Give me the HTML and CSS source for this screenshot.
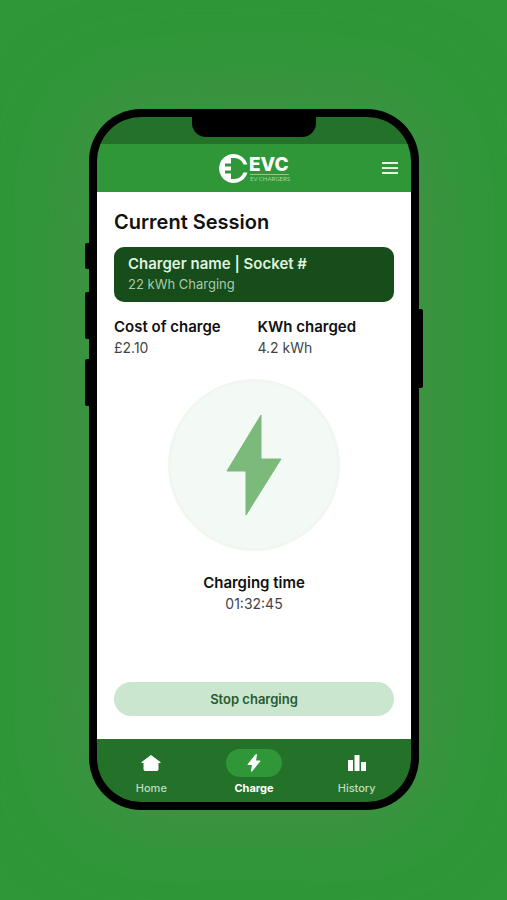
FILE: index.html
```html
<!DOCTYPE html>
<html lang="en">
<head>
<meta charset="UTF-8" />
<meta name="viewport" content="width=device-width, initial-scale=1" />
<title>EVC - Current Session</title>
<link rel="stylesheet" href="styles.css">
</head>
<body>

<div class="stage">
  <div class="phone">
    <!-- Side buttons -->
    <span class="side-key mute"></span>
    <span class="side-key volume-up"></span>
    <span class="side-key volume-down"></span>
    <span class="side-key power"></span>
    <span class="notch"></span>

    <div class="screen">
      <div class="status-bar"></div>

      <header class="header">
        <svg class="logo" viewBox="0 0 72 32" role="img" aria-label="EVC EV Chargers">
          <path fill="#fff" d="M15.500 2A14.500 14.500 0 1 0 29.500 20.500H25.500A10.500 10.500 0 0 1 16.500 27H13V21.500H7V18.500H13V14.500H7V11.500H13V6H16.500A10.500 10.500 0 0 1 25.500 12.500H29.500A14.500 14.500 0 0 0 15.500 2Z"/>
          <text class="logo-name" x="31" y="19">EVC</text>
          <path stroke="#8fc993" stroke-width="1" d="M32 22.500H71"/>
          <text class="logo-tag" x="32" y="29">EV CHARGERS</text>
        </svg>
        <button class="menu-button" type="button" aria-label="Menu">
          <svg width="16" height="12" viewBox="0 0 16 12"><path stroke="#e4f5e2" stroke-width="2" d="M0 1H16M0 6H16M0 11H16"/></svg>
        </button>
      </header>

      <main class="content">
        <h1>Current Session</h1>

        <section class="charger-card">
          <h2>Charger name | Socket #</h2>
          <p>22 kWh Charging</p>
        </section>

        <div class="stats">
          <div class="stat">
            <h2>Cost of charge</h2>
            <p>£2.10</p>
          </div>
          <div class="stat">
            <h2>KWh charged</h2>
            <p>4.2 kWh</p>
          </div>
        </div>

        <div class="charge-circle">
          <svg width="56" height="102" viewBox="0 0 56 102"><path fill="#7bba7b" stroke="#7bba7b" stroke-linejoin="round" d="M35 1V45H55L20 101V57H1Z"/></svg>
        </div>

        <div class="stat time">
          <h2>Charging time</h2>
          <p>01:32:45</p>
        </div>

        <button class="stop-button" type="button">Stop charging</button>
      </main>

      <nav class="nav">
        <a class="nav-item" href="#">
          <span class="nav-icon">
            <svg width="20" height="16" viewBox="0 0 20 16"><path fill="#fff" stroke="#fff" stroke-linejoin="round" d="M10 .5L19.300 7.500H17V14.500Q17 15.500 16 15.500H4Q3 15.500 3 14.500V7.500H.7Z"/></svg>
          </span>
          Home
        </a>
        <a class="nav-item active" href="#">
          <span class="nav-icon">
            <svg width="14" height="18" viewBox="0 0 14 18"><path fill="#fff" stroke="#fff" stroke-linejoin="round" d="M8.800 .6L.9 10.500H5.500L4.500 17.400L13.100 7H8.500L9.500 .6Z"/></svg>
          </span>
          Charge
        </a>
        <a class="nav-item" href="#">
          <span class="nav-icon">
            <svg width="18" height="16" viewBox="0 0 18 16"><path fill="#fff" d="M0 5H5V16H0ZM6.500 0H11.500V16H6.500ZM13 7H18V16H13Z"/></svg>
          </span>
          History
        </a>
      </nav>
    </div>
  </div>
</div>

</body>
</html>
```
FILE: styles.css
```css
* {
  box-sizing: border-box;
}
body {
  margin: 0;
  font-family: Inter, Arial, sans-serif;
  color: #111;
}
h1, h2, p {
  margin: 0;
}
.stage {
  display: flex;
  min-height: 100vh;
  padding: 109px 88px 90px 89px;
  background: #2f9738;
}
.phone {
  position: relative;
  display: flex;
  flex: 1;
  padding: 8px;
  background: #000;
  border-radius: 52px;
  box-shadow: 0 0 90px 10px rgba(75, 142, 75, 0.8);
}
.notch {
  position: absolute;
  top: 0;
  left: 50%;
  width: 124px;
  height: 28px;
  margin-left: -62px;
  background: #000;
  border-radius: 0 0 14px 14px;
}
.side-key {
  position: absolute;
  left: -4px;
  width: 8px;
  height: 47px;
  background: #000;
  border-radius: 2px;
}
.mute {
  top: 134px;
  height: 26px;
}
.volume-up {
  top: 183px;
}
.volume-down {
  top: 250px;
}
.power {
  top: 200px;
  right: -4px;
  left: auto;
  height: 79px;
}
.screen {
  display: flex;
  flex: 1;
  flex-direction: column;
  overflow: hidden;
  border-radius: 44px;
}
.status-bar {
  height: 27px;
  background: #247129;
}

/* Header */
.header {
  display: grid;
  grid-template-columns: 1fr auto 1fr;
  align-items: center;
  height: 48px;
  padding: 0 13px;
  background: #2f9738;
}
.logo {
  grid-column: 2;
  width: 72px;
  height: 32px;
}
.logo-name {
  fill: #fff;
  font-size: 19px;
  font-weight: 800;
}
.logo-tag {
  fill: #a5d5a5;
  font-family: Lato, Arial, sans-serif;
  font-size: 6px;
}
.menu-button {
  display: flex;
  justify-self: end;
  padding: 0;
  background: none;
  border: none;
  cursor: pointer;
}

/* Session */
.content {
  display: flex;
  flex: 1;
  flex-direction: column;
  padding: 16px 17px 23px;
  background: #fff;
}
h1 {
  font-size: 20px;
  line-height: 28px;
  font-weight: 600;
}
h2 {
  font-size: 15px;
  line-height: 20px;
  font-weight: 600;
}
.charger-card {
  margin-top: 11px;
  padding: 7px 14px;
  background: #174c1b;
  border-radius: 10px;
}
.charger-card h2 {
  color: #dff1df;
}
.charger-card p {
  color: #a9c9a9;
  font-size: 13px;
  line-height: 21px;
}
.stats {
  display: grid;
  grid-template-columns: 1fr 1fr;
  gap: 7px;
  margin-top: 15px;
}
.stat p {
  color: #444;
  font-size: 14px;
  line-height: 21px;
}
.charge-circle {
  display: flex;
  align-self: center;
  align-items: center;
  justify-content: center;
  width: 172px;
  height: 172px;
  margin-top: 21px;
  background: #f3f9f4;
  border: 3px solid #f1f6f1;
  border-radius: 50%;
}
.time {
  margin-top: 22px;
  text-align: center;
}
.stop-button {
  height: 34px;
  margin-top: auto;
  background: #cbe6ce;
  border: none;
  border-radius: 17px;
  color: #285a30;
  font-family: inherit;
  font-size: 13px;
  font-weight: 600;
  cursor: pointer;
}

/* Bottom navigation */
.nav {
  display: grid;
  grid-template-columns: 1fr 1fr 1fr;
  padding: 10px 3px 6px;
  background: #247129;
}
.nav-item {
  display: flex;
  flex-direction: column;
  align-items: center;
  gap: 3px;
  color: #c0dcc0;
  font-size: 11px;
  line-height: 16px;
  font-weight: 500;
  text-decoration: none;
}
.nav-icon {
  display: flex;
  align-items: center;
  justify-content: center;
  width: 56px;
  height: 28px;
  border-radius: 14px;
}
.active {
  color: #fff;
  font-weight: 700;
}
.active .nav-icon {
  background: #2f9738;
}
```
